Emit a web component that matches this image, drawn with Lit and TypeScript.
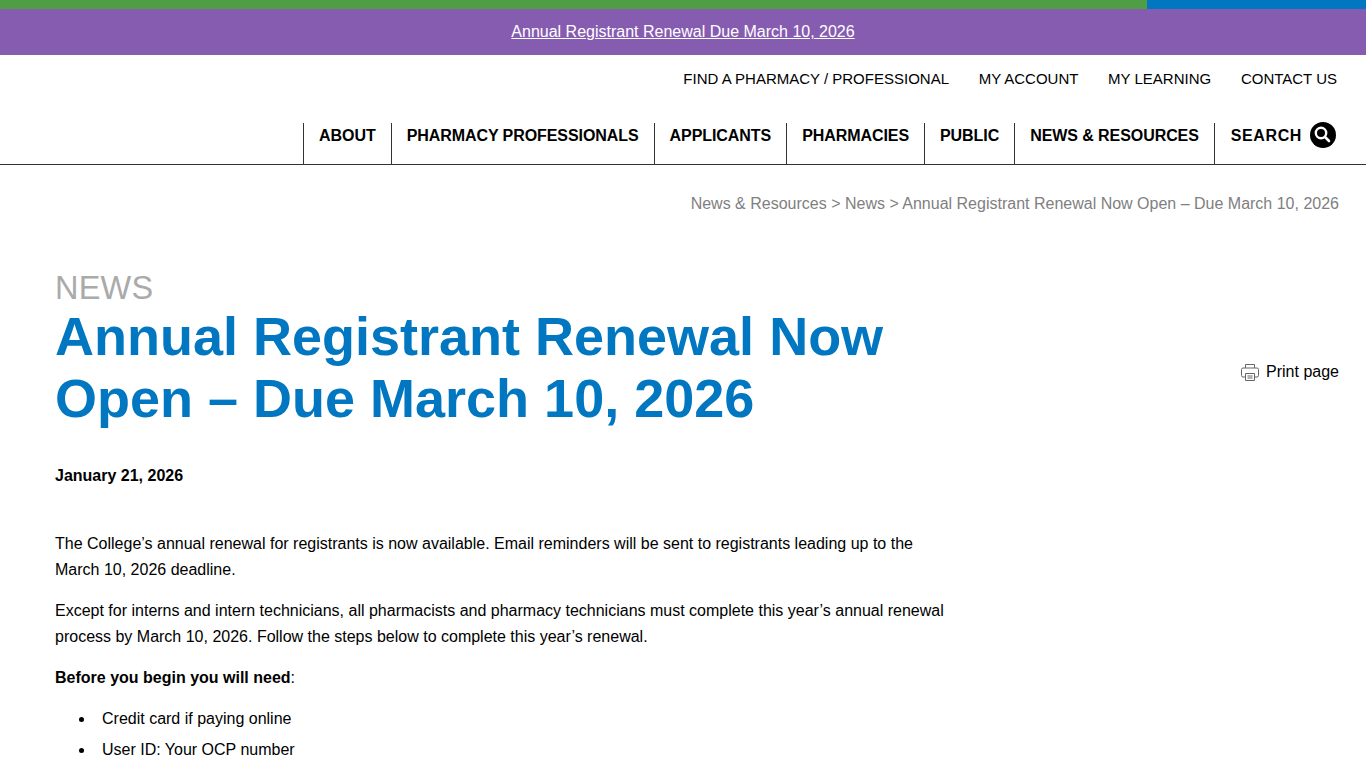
import { LitElement, html, css } from "lit";
import { customElement } from "lit/decorators.js";

@customElement("app-root")
export class AppRoot extends LitElement {
  static styles = css`
    :host { display: block; height: 768px; overflow: hidden; background: #fff; color: #000; font-family: "Liberation Sans", Arial, sans-serif; font-size: 16px; }
    a { color: inherit; text-decoration: none; }
    .bar { display: flex; height: 9px; }
    .bar .g { flex: 1; background: #4f9d45; }
    .bar .b { width: 219px; background: #0077c0; }
    .notice { height: 46px; background: #865cb0; display: flex; align-items: center; justify-content: center; color: #fff; }
    .notice a { text-decoration: underline; }
    .util { display: flex; justify-content: flex-end; gap: 29.7px; padding: 15px 29px 0 0; height: 53px; line-height: 18px; box-sizing: border-box; font-size: 15px; }
    .nav { display: flex; justify-content: flex-end; padding: 15px 30px 0 0; box-sizing: border-box; height: 57px; border-bottom: 1px solid #333; }
    .nav a { border-left: 1px solid #333; padding: 0 15px; font-weight: 700; letter-spacing: -0.07px; line-height: 26px; height: 41px; box-sizing: border-box; }
    .search { display: flex; align-items: flex-start; gap: 8px; border-left: 1px solid #333; padding-left: 16px; font-weight: 700; letter-spacing: 0.6px; line-height: 26px; }
    .search svg { margin-top: -1px; }
    .crumbs { text-align: right; color: #808080; padding: 29px 27px 0 0; line-height: 20px; }
    main { padding: 0 55px; }
    .cat { margin-top: 57px; font-size: 32.5px; letter-spacing: 0.2px; line-height: 34px; color: #aaa; }
    .head { display: flex; justify-content: space-between; align-items: center; margin-right: -28px; }
    h1 { margin: 0; width: 900px; font-size: 54px; line-height: 62px; font-weight: 700; color: #0077c0; }
    .print { display: flex; align-items: center; gap: 7px; margin-top: 10px; }
    .date { font-weight: 700; margin-top: 37px; line-height: 20px; }
    .body { width: 900px; margin-top: 45px; line-height: 26px; }
    p { margin: 0 0 15px; }
    ul { margin: 0; padding-left: 24px; list-style: none; }
    li { margin-bottom: 5px; display: flex; align-items: center; }
    li::before { content: ""; width: 5px; height: 5px; border-radius: 50%; background: #000; margin-right: 18px; }
  `;
  render() {
    return html`
      <div class="bar"><div class="g"></div><div class="b"></div></div>
      <div class="notice"><a href="#">Annual Registrant Renewal Due March 10, 2026</a></div>
      <div class="util"><a>FIND A PHARMACY / PROFESSIONAL</a><a>MY ACCOUNT</a><a>MY LEARNING</a><a>CONTACT US</a></div>
      <nav class="nav">
        <a>ABOUT</a><a>PHARMACY PROFESSIONALS</a><a>APPLICANTS</a><a>PHARMACIES</a><a>PUBLIC</a><a>NEWS &amp; RESOURCES</a>
        <div class="search">SEARCH
          <svg width="26" height="26" viewBox="0 0 26 26"><circle cx="13" cy="13" r="13" fill="#000"/><circle cx="11" cy="11" r="5.200" fill="none" stroke="#fff" stroke-width="2.400"/><path d="M15 15l4 4" stroke="#fff" stroke-width="2.600" stroke-linecap="round"/></svg>
        </div>
      </nav>
      <div class="crumbs">News &amp; Resources &gt; News &gt; Annual Registrant Renewal Now Open – Due March 10, 2026</div>
      <main>
        <div class="cat">NEWS</div>
        <div class="head">
          <h1>Annual Registrant Renewal Now Open – Due March 10, 2026</h1>
          <a class="print">
            <svg width="18" height="18" viewBox="0 0 18 18" fill="none" stroke="#666"><path d="M4.500 5V1.500h9V5M4 14H2a1.500 1.500 0 0 1-1.500-1.500V6.500A1.500 1.500 0 0 1 2 5h14a1.500 1.500 0 0 1 1.500 1.500v6A1.500 1.500 0 0 1 16 14h-2M4.500 10.500h9v7h-9zM6.500 13h5M6.500 15h5"/></svg>
            Print page</a>
        </div>
        <div class="date">January 21, 2026</div>
        <div class="body">
          <p>The College’s annual renewal for registrants is now available. Email reminders will be sent to registrants leading up to the March 10, 2026 deadline.</p>
          <p>Except for interns and intern technicians, all pharmacists and pharmacy technicians must complete this year’s annual renewal process by March 10, 2026. Follow the steps below to complete this year’s renewal.</p>
          <p><b>Before you begin you will need</b>:</p>
          <ul><li>Credit card if paying online</li><li>User ID: Your OCP number</li></ul>
        </div>
      </main>
    `;
  }
}
